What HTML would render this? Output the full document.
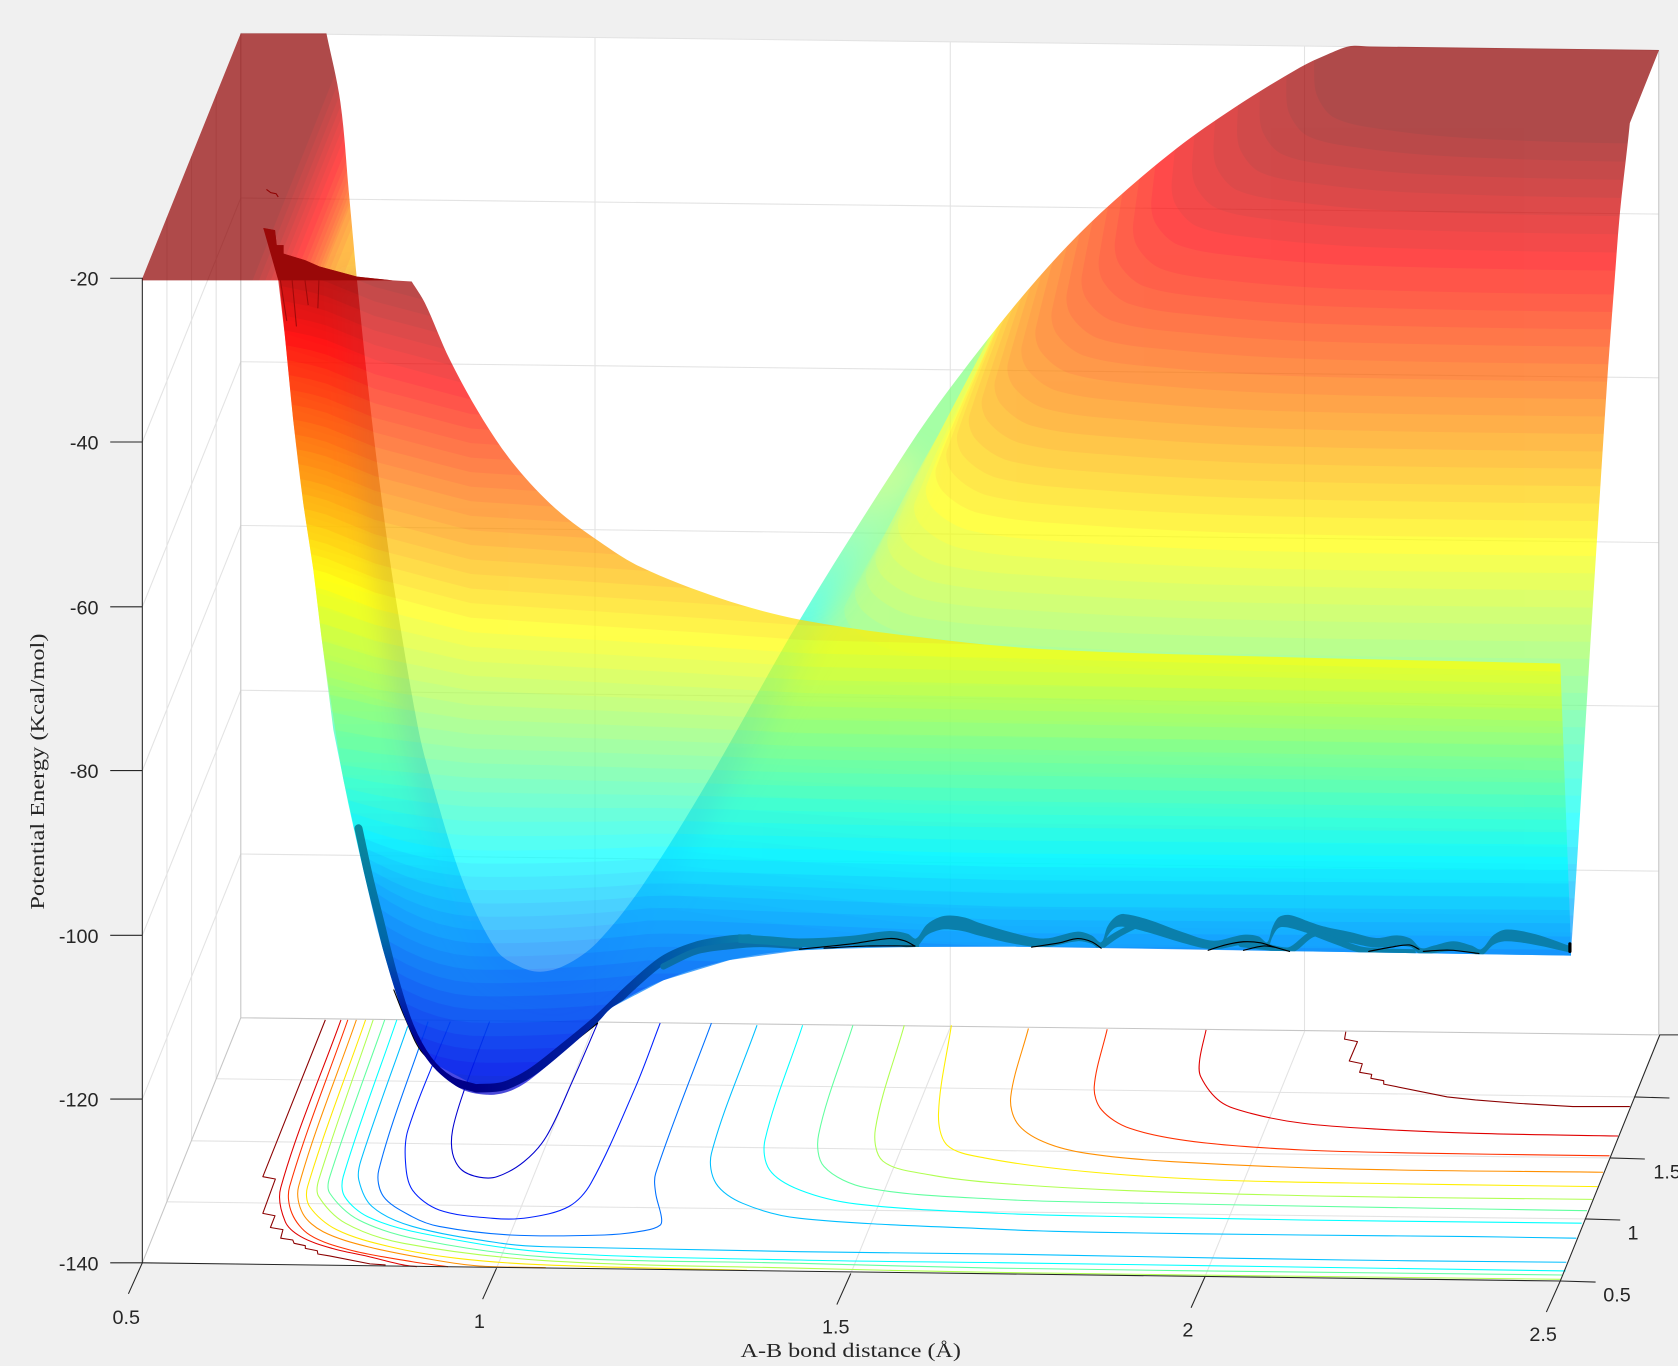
<!DOCTYPE html>
<html>
<head>
<meta charset="utf-8">
<title>Potential Energy Surface</title>
<style>
html,body{margin:0;padding:0;background:#f0f0f0;width:1678px;height:1366px;overflow:hidden}
svg{display:block}
.t{font-family:"Liberation Sans",sans-serif;font-size:18.5px;fill:#262626}
.s{font-family:"Liberation Serif",serif;font-size:18.5px;fill:#262626}
</style>
</head>
<body>
<svg xmlns="http://www.w3.org/2000/svg" width="1678" height="1366" viewBox="0 0 1568 1276.4">
<defs>
<clipPath id="cb"><path id="cbp" d=""/></clipPath>
<clipPath id="cf"><path id="cfp" d=""/></clipPath>
<filter id="bl" filterUnits="userSpaceOnUse" x="0" y="0" width="1568" height="1276"><feGaussianBlur stdDeviation="12"/></filter>
<linearGradient id="ga" gradientUnits="userSpaceOnUse" x1="0" y1="775" x2="0" y2="1018">
<stop offset="0" stop-color="#0a8a9c"/><stop offset=".42" stop-color="#0068a8"/><stop offset=".62" stop-color="#0030b0"/><stop offset=".82" stop-color="#000090"/><stop offset="1" stop-color="#000088"/>
</linearGradient>
<linearGradient id="gb" gradientUnits="userSpaceOnUse" x1="445" y1="0" x2="700" y2="0">
<stop offset="0" stop-color="#000088"/><stop offset=".4" stop-color="#0020a0"/><stop offset=".7" stop-color="#0058a8"/><stop offset="1" stop-color="#0a7fab"/>
</linearGradient>
<linearGradient id="fr" gradientUnits="userSpaceOnUse" x1="0" y1="400" x2="0" y2="908">
<stop offset="0" stop-color="#d0ff70" stop-opacity="0"/><stop offset=".1" stop-color="#b0ff70"/><stop offset=".35" stop-color="#20ffe0"/><stop offset=".65" stop-color="#00b0ff"/><stop offset="1" stop-color="#0060ff"/>
</linearGradient>
<linearGradient id="fl" gradientUnits="userSpaceOnUse" x1="0" y1="262" x2="0" y2="908">
<stop offset="0" stop-color="#a04040" stop-opacity=".5"/><stop offset=".36" stop-color="#906060"/><stop offset=".47" stop-color="#807070"/><stop offset=".65" stop-color="#2090ff"/><stop offset="1" stop-color="#0060ff"/>
</linearGradient>
</defs>
<rect width="1568" height="1277" fill="#f0f0f0"/>
<!-- walls -->
<polygon points="133,260 225,31 1550,47 1550,967 1458,1197 133,1180" fill="#fff"/>
<!-- grid -->
<g fill="none" stroke="#e3e3e3" stroke-width="1">
<path d="M225 185L1550 200M225 338L1550 353M225 491L1550 507M225 645L1550 660M225 798L1550 814M225 31L1550 47"/>
<path d="M556 35V955M888 39V960M1219 43V964"/>
<path d="M133 413L225 185M133 567L225 338M133 720L225 491M133 874L225 645M133 1027L225 798"/>
<path d="M156 203V1123M179 146V1066M202 88V1008"/>
<path d="M156 1123L1481 1139M179 1066L1504 1082M202 1008L1527 1025"/>
<path d="M464 1185L556 956M795 1190L888 960M1126 1193L1219 964"/>
</g>
<path d="M225 31V951L133 1180M225 951L1550 967M1550 47V967" fill="none" stroke="#c6c6c6" stroke-width="1"/>
<g id="floor" fill="none" stroke-width="1" stroke-linejoin="round"></g>
<!-- axes -->
<g fill="none" stroke="#262626" stroke-width="1">
<path d="M103 260H133V1180H103M103 413H133M103 567H133M103 720H133M103 874H133M103 1027H133"/>
<path d="M133 1180L1458 1197L1551 967L1568 967"/>
<path d="M133 1180L120 1209M464 1185L451 1214M795 1190L782 1219M1126 1193L1113 1222M1458 1197L1445 1226"/>
<path d="M1458 1197L1491 1198M1481 1139L1514 1140M1504 1082L1537 1083M1527 1025L1560 1026"/>
</g>
<g id="back" clip-path="url(#cb)" opacity=".71"></g>
<g id="front" clip-path="url(#cf)" opacity=".71"></g>
<path d="M246 213L257 215L258.6 229L265 229L265 237L285 243L298.6 249L333.7 258.5L367 262L260 262Z" fill="#9a0808"/>
<path d="M273 262L277 305M285 262L288 285M298 262L297 288M262 262L268 300" stroke="#a00a0a" stroke-width="1" fill="none"/>
<path d="M249 177L253 180L258 181L260 184" fill="none" stroke="#8f0000" stroke-width="1"/>
<g id="traj" fill="none" stroke-linecap="round" stroke-linejoin="round"></g>
<!-- labels -->
<g class="t" text-anchor="end">
<text x="92" y="267">-20</text><text x="92" y="420">-40</text><text x="92" y="574">-60</text>
<text x="92" y="727">-80</text><text x="92" y="881">-100</text><text x="92" y="1034">-120</text><text x="92" y="1187">-140</text>
</g>
<g class="t" text-anchor="middle">
<text x="118" y="1237">0.5</text><text x="448" y="1241">1</text><text x="781" y="1246">1.5</text><text x="1110" y="1249">2</text><text x="1442" y="1253">2.5</text>
<text x="1511" y="1216">0.5</text><text x="1526" y="1158">1</text>
</g>
<text class="t" x="1545" y="1101">1.5</text>
<text class="s" x="795" y="1268" text-anchor="middle" textLength="206" lengthAdjust="spacingAndGlyphs">A-B bond distance (Å)</text>
<text class="s" transform="translate(41,721) rotate(-90)" text-anchor="middle" textLength="258" lengthAdjust="spacingAndGlyphs">Potential Energy (Kcal/mol)</text>
</svg>
<script>
(function(){
function dist(a,b){return Math.sqrt((a[0]-b[0])*(a[0]-b[0])+(a[1]-b[1])*(a[1]-b[1]))||1;}
function tan(a,b,c){var s=dist(a,b)+dist(b,c);return [(c[0]-a[0])/s,(c[1]-a[1])/s];}
function cr(p){var s='';for(var i=0;i<p.length-1;i++){var a=p[i-1]||p[i],b=p[i],c=p[i+1],d=p[i+2]||c,l=dist(b,c)/3;
var t1=tan(a,b,c),t2=tan(b,c,d);
s+='C'+(b[0]+t1[0]*l).toFixed(1)+' '+(b[1]+t1[1]*l).toFixed(1)+' '+(c[0]-t2[0]*l).toFixed(1)+' '+(c[1]-t2[1]*l).toFixed(1)+' '+c[0]+' '+c[1];}return s;}
function hx(v){var n=Math.round(Math.max(0,Math.min(1,v))*255).toString(16);return n.length<2?'0'+n:n;}
function jet(L){var r=0,g=0,b=0;
if(L<=8){b=.5+L/16;}else if(L<=24){g=(L-8)/16;b=1;}else if(L<=40){r=(L-24)/16;g=1;b=1-r;}else if(L<=56){r=1;g=1-(L-40)/16;}else{r=1-(L-56)/16;}
if(L<=18){b*=L<=8?.9:.9+.1*(L-8)/10;}
return '#'+hx(r)+hx(g)+hx(b);}
function cl(v,a,b){return Math.max(a,Math.min(b,v));}
function P(p){return 'M'+p[0][0]+' '+p[0][1]+cr(p);}

/* outlines */
var backD='M133 260L225 31L305 31'+cr([[305,31],[318,95],[326,180],[333.6,262],[345.7,377],[360,492],[370.6,564],[391,682],[403,729],[433,825],[464,888],[485,903],[505,908],[528,902],[557.6,881],[600,828],[662,729],[748,578],[847.2,420.5],[887.7,362.8],[950,283.4],[996.7,230.5],[1040.3,188.4],[1099.5,138.6],[1152.5,101.2],[1214.7,63],[1240,51],[1261,43.2],[1280,43.4]])
+'L1550.3 46.7L1523 115'+cr([[1523,115],[1521,134],[1513.7,199],[1509,259],[1502.7,343],[1497,430],[1485,620],[1474,800],[1468,890]])
+'L1468 893L1219 889L948 884.6L800 885L747 888L682 897L620 916L573 940.6L500 1000L455 1020L402 992L380 954L358 887L340 815L321 729L311.5 682L301 600L292.8 532.6L283.4 470.3L274 392.5L266.3 314.6L260 262L133 262Z';
document.getElementById('cbp').setAttribute('d',backD);
var frontD='M246 213L257 215L258.6 229L265 229L265 237L285 243L298.6 249L333.7 258.5L367 262L384.7 263'
+cr([[384.7,263],[397,283],[420.5,336.4],[451.6,392.5],[482,436],[520,476],[560,506],[598,529.5],[672.8,559],[749,579.3],[887.7,598.7],[990.5,607.4],[1200,614],[1458,620]])
+'L1468 885L1468 893'+cr([[1468,893],[1219,889],[948,884.6],[747,888],[682,897],[620,916],[573,940.6],[557.6,956],[495,1009],[475,1020],[454.7,1023],[430,1017],[402,993.6],[380,955],[358,887.7],[340,815],[321,729],[310,660],[301,600],[292.8,532.6],[283.4,470.3],[274,392.5],[266.3,314.6],[260,252]])+'L246 213Z';
document.getElementById('cfp').setAttribute('d',frontD);

/* back sheet bands */
function bb(L){return L>=56?134+(63-L)*17:L>=40?259+(56-L)*16.3:520+(40-L)*16;}
function sh(L){return (40-L)*4.1-40;}
var h='<rect x="0" y="0" width="1700" height="1300" fill="'+jet(16)+'"/>';
for(var L=17;L<=32;L++){var d='M100 -100';for(var x=100;x<=1650;x+=50){d+='L'+x+' '+(bb(L)-(1520-x)*.012-sh(L)*cl((860-x)/460,0,1)).toFixed(1);}d+='L1650 -100Z';
h+='<path d="'+d+'" fill="'+jet(L)+'"/>';}
var tab={63:262,62:268,61:274,60:279,59:284,58:289,57:294,56:300,55:305,54:309,53:313,52:317,51:320,50:323,49:325,48:330,47:335,46:345};
var cs={63:1228,62:1202,61:1177,60:1156,59:1134,58:1114,57:1095,56:1076,55:1059,54:1042,53:1027,52:1011,51:997,50:983,49:968,48:955,47:942,46:930,45:918,44:906,43:895,42:885,41:875,40:866,39:855,38:840,37:830,36:819,35:810,34:800,33:790};
for(L=33;L<=63;L++){var c=cs[L],f=1+(63-L)*.05,b=bb(L),s=(63-L)*.02;
var pts=[[c+200*s,b-267],[c,b-67],[c+3*f,b-44],[c+19*f,b-24],[c+65*f,b-13],[c+144*f,b-5],[Math.max(1520,c+150*f+60),b],[1800,b+1]];
h+='<path d="M'+pts[0][0]+' -100L'+pts[0][0]+' '+pts[0][1]+cr(pts)+'L1800 -100Z" fill="'+jet(L)+'"/>';
if(L<=45){h+='<rect x="-50" y="-100" width="480" height="362" fill="'+jet(L)+'"/>';}
else{var xL=tab[L];var xe=xL-26;h+='<path d="M-50 -100L'+(xL+119)+' -100L'+xe+' 262L-50 262Z" fill="'+jet(L)+'"/>';}
var yU=327+(55-L)*13.7,x0=271+(262-yU)/.3,xl=Math.max(-50,x0);
if(xl<430){var yl=yU+(xl-271)*.3,yr=yU+(430-271)*.3;
h+='<path d="M'+xl+' 262L430 262L430 '+yr+'L'+xl+' '+yl+'Z" fill="'+jet(L)+'"/>';}
}
/* fan shading along the fold */
h+='<g filter="url(#bl)" fill="none">';
h+='<path stroke="url(#fr)" stroke-width="40" d="'+P([[505,908],[528,902],[557.6,881],[600,828],[662,729],[748,578],[847.2,420.5]])+'"/>';
h+='<path stroke="url(#fl)" stroke-width="30" d="'+P([[333.6,262],[345.7,377],[360,492],[370.6,564],[391,682],[403,729],[433,825],[464,888],[485,903],[505,908]])+'"/>';
h+='</g>';
document.getElementById('back').innerHTML=h;

/* front sheet bands */
function Y(L){return L>=40?598-(L-40)*13.6:598+(40-L)*12.4;}
var hp=[[260,-70],[300,-62],[350,-42],[439,-19],[660,-6],[750,0],[1470,14]];
function hh(x){if(x<=260)return -70;for(var i=1;i<hp.length;i++){if(x<=hp[i][0]){var a=hp[i-1],b=hp[i];return a[1]+(x-a[0])/(b[0]-a[0])*(b[1]-a[1]);}}return 14;}
function k(x){var d=Math.abs(x-450);if(x<450)return Math.min(.0035*d*d,150);var v=Math.min(.0004*d*d,10);return v*(x>640?Math.max(0,1-(x-640)/300):1);}
function yF(L,x){var t=cl((L-24)/16,0,1),w=cl((29-L)/11,0,1);return Y(L)+t*hh(x)-w*k(x)+(x-750)*.006;}
h='<rect x="0" y="0" width="1700" height="1300" fill="'+jet(63)+'"/>';
for(L=62;L>=1;L--){d='M230 1300';for(x=230;x<=1510;x+=15){d+='L'+x+' '+yF(L,x).toFixed(1);}d+='L1510 1300Z';
h+='<path d="'+d+'" fill="'+jet(L)+'"/>';}
document.getElementById('front').innerHTML=h;

/* floor contours */
var C=[
['#8b0000',0,[[304,953],[245.6,1099.5],[257.3,1101.7],[245.6,1133.8],[257,1136],[252.7,1147],[264.4,1149],[262.3,1157],[273.6,1158.7],[274.8,1161.8],[285.3,1164],[285.3,1166.5],[296.5,1168.7],[297,1171.8],[308,1173.6],[345.7,1181],[360.3,1182]]],
['#8b0000',0,[[1257.6,964],[1256.4,971],[1268.5,973.3],[1260.8,991.4],[1273,994],[1270.5,1002],[1281.8,1003.9],[1281,1007.6],[1293,1009.8],[1293,1013],[1352.5,1025],[1378.8,1027.8],[1419,1031],[1469.7,1034],[1523,1034]]],
['#e00000',1,[[318.6,953],[262.3,1110],[266.5,1141.5],[281,1155.5],[310.3,1166.5],[343.7,1174],[377,1182],[389.5,1183.6]]],
['#e00000',1,[[1127,962.4],[1121,990.5],[1122,1006],[1140.4,1029.4],[1168.7,1040.3],[1217.2,1049.6],[1286,1055],[1378.8,1059],[1512,1061.5]]],
['#ff3000',1,[[325,953],[270.6,1108.8],[272.8,1133.8],[289.4,1154],[327,1168],[385.4,1179],[418.7,1183.6]]],
['#ff3000',1,[[1034.6,961.8],[1022.5,1015.4],[1029.3,1037],[1055.6,1054.3],[1116.2,1066.8],[1217.2,1074.6],[1338.4,1077.7],[1504,1080]]],
['#ff9000',1,[[333,953],[279,1108.8],[283,1134],[302,1151],[343.7,1165],[406,1177.4],[448,1183],[510,1184.5]]],
['#ff8f00',1,[[961,961],[944.5,1024.7],[950.6,1049.6],[974.8,1066.8],[1015.2,1077.7],[1096,1085.5],[1257.6,1092.3],[1498,1095.4]]],
['#ffe800',1,[[341.6,953],[287.4,1108.8],[289.4,1127.5],[314.5,1149],[364.5,1165],[427,1175.8],[510,1182],[698,1187]]],
['#ffef00',1,[[889,958],[877,1040],[885,1070],[920,1082],[1015.2,1094.8],[1136.4,1102.6],[1298,1106],[1493,1108.8]]],
['#b0ff50',1,[[348.7,953],[297.8,1102.6],[297.8,1118],[322.8,1143],[377,1161.8],[510,1178],[747,1185],[934,1189],[1458.6,1195.4]]],
['#b0ff50',1,[[845,958],[818,1055],[825,1085],[870,1098],[934.4,1105.7],[1055.6,1112.6],[1257.6,1118],[1488,1120.7]]],
['#60ff9f',1,[[359.5,953],[308.2,1099.5],[308.2,1115],[335.3,1140],[393.7,1158.7],[510,1174.5],[747,1180.5],[934,1185],[1459.6,1191.4]]],
['#60ff9f',1,[[797,958],[765,1060],[770,1090],[810,1110],[934.4,1120.7],[1055,1124],[1338,1129],[1483,1131.3]]],
['#00ffff',1,[[370.8,953],[320.7,1099.5],[322,1118],[343.7,1137],[393.7,1152.4],[510,1170],[747,1177.4],[934,1179.9],[1463,1187.6]]],
['#00ffff',1,[[750,958],[714.9,1065],[719,1093],[747.4,1112],[800,1125],[934,1133.8],[1055.6,1137],[1217,1140],[1478,1143]]],
['#00bfff',1,[[381,959],[337.4,1084],[335.3,1102.6],[347.8,1127.5],[385.4,1146],[468.8,1161.8],[510.5,1165],[747.4,1169.6],[934.4,1171.8],[1055.6,1174],[1257.6,1177.4],[1463.6,1179.5]]],
['#00bfff',1,[[707.4,958],[664.8,1077.7],[669,1105.7],[694,1124.4],[747.4,1138.4],[934,1148.7],[1027,1151.5],[1217,1154],[1375,1155.5],[1473,1157]]],
['#0070ff',1,[[400,954.6],[354,1093],[358.3,1118],[385.4,1137],[410.4,1146],[477,1154],[564.7,1154],[602,1150],[617,1144.7],[618,1137],[612.7,1115],[612.7,1096.4],[664.8,956]]],
['#0020ff',1,[[420.8,954.6],[381.2,1056],[379,1087],[385.4,1112],[410.4,1130.6],[460.4,1138.4],[493.8,1137.8],[531.4,1127.5],[552.2,1105.7],[594,1015.4],[616.9,956]]],
['#0000d0',1,[[457.5,954.6],[433.3,1020],[422.9,1056],[422.9,1077.7],[431.2,1093],[447.9,1100],[464.6,1099.5],[489.6,1085.5],[510.5,1062],[535.5,1009],[558.5,956]]]
];
h='';C.forEach(function(c){var p=c[2];
if(c[1]){h+='<path stroke="'+c[0]+'" d="'+P(p)+'"/>';}
else{h+='<polyline stroke="'+c[0]+'" points="'+p.join(' ')+'"/>';}});
document.getElementById('floor').innerHTML=h;

/* trajectory */
function ribbon(p){var t=p.map(function(q){return [q[0],q[1]-q[2]/2];}),b=p.map(function(q){return [q[0],q[1]+q[2]/2];}).reverse();
return P(t)+'L'+b[0][0]+' '+b[0][1]+cr(b)+'Z';}
var tr='';
tr+='<path stroke="#000" stroke-width="1" d="'+P([[368,925],[378,950],[395,984],[433,1015]])+'"/>';
tr+='<path stroke="#000" stroke-width="1.8" d="'+P([[495,1005],[530,978],[558,956]])+'"/>';
tr+='<g clip-path="url(#cf)">';
tr+='<path stroke="url(#ga)" stroke-width="7.5" d="'+P([[335,774],[345,820],[355,860],[368,912],[383,959],[400,990],[420.5,1009],[445,1017]])+'"/>';
tr+='<path stroke="url(#gb)" stroke-width="8" d="'+P([[445,1017],[470,1015],[495,1003],[525,980],[557.6,953],[590,922],[620,897],[650,884],[682,878],[700,877]])+'"/>';
tr+='<path stroke="#0a6fa8" stroke-width="6" d="'+P([[620,903],[650,889],[682,884],[710,882],[747,884]])+'"/>';
var t1='#0a7fab';
tr+='<path fill="'+t1+'" stroke="none" d="'+ribbon([[690,877,8],[720,879,8],[747,881,8],[795,879,9],[831,875,10],[848,877,9],[856,881,8],[866,869,10],[878,863,12],[888,862,13],[902,864,13],[914,868,12],[948,877,10],[976,881,8],[1007,875,9],[1020,878,8],[1029,884,7],[1035,870,9],[1042,862,10],[1050,860,12],[1072,865,12],[1105,876,10],[1134,883,8],[1162,878,9],[1176,879,8],[1184,884,7],[1189,871,9],[1195,862,10],[1205,861,12],[1224,867,11],[1238,871,10],[1262,876,10],[1286,881,9],[1305,879,10],[1318,881,8],[1328,889,6],[1340,887,7],[1358,884,9],[1375,887,7],[1384,890,6],[1396,878,9],[1408,874,11],[1435,878,10],[1467,887,6]])+'"/>';
tr+='<path stroke="'+t1+'" stroke-width="6" d="'+P([[1029,884],[1043,874],[1062,864]])+'"/>';
tr+='<path stroke="'+t1+'" stroke-width="6" d="'+P([[1160,882],[1184,885],[1205,888],[1224,874],[1238,869]])+'"/>';
tr+='<path stroke="'+t1+'" stroke-width="6" d="'+P([[1224,870],[1250,880],[1275,888],[1320,890]])+'"/>';
tr+='<path stroke="'+t1+'" stroke-width="6" d="'+P([[800,882],[831,880],[856,884]])+'"/>';
tr+='</g>';
var bl=[[[747,887],[795,882],[831,877],[845,879],[855,884]],[[770,886],[810,884],[855,884]],[[964,885],[990,881],[1007,877],[1020,880],[1029,886]],[[1129,888],[1145,883],[1162,880],[1178,881],[1191,885],[1205,889]],[[1162,888],[1180,884],[1191,885]],[[1279,889],[1300,885],[1317,883],[1326,887]],[[1330,889],[1345,888],[1358,888],[1382,891]]];
bl.forEach(function(p){tr+='<path stroke="#000" stroke-width="1.1" d="'+P(p)+'"/>';});
tr+='<path stroke="#000" stroke-width="3" d="M1467 882V889"/>';
document.getElementById('traj').innerHTML=tr;
})();
</script>
</body>
</html>
